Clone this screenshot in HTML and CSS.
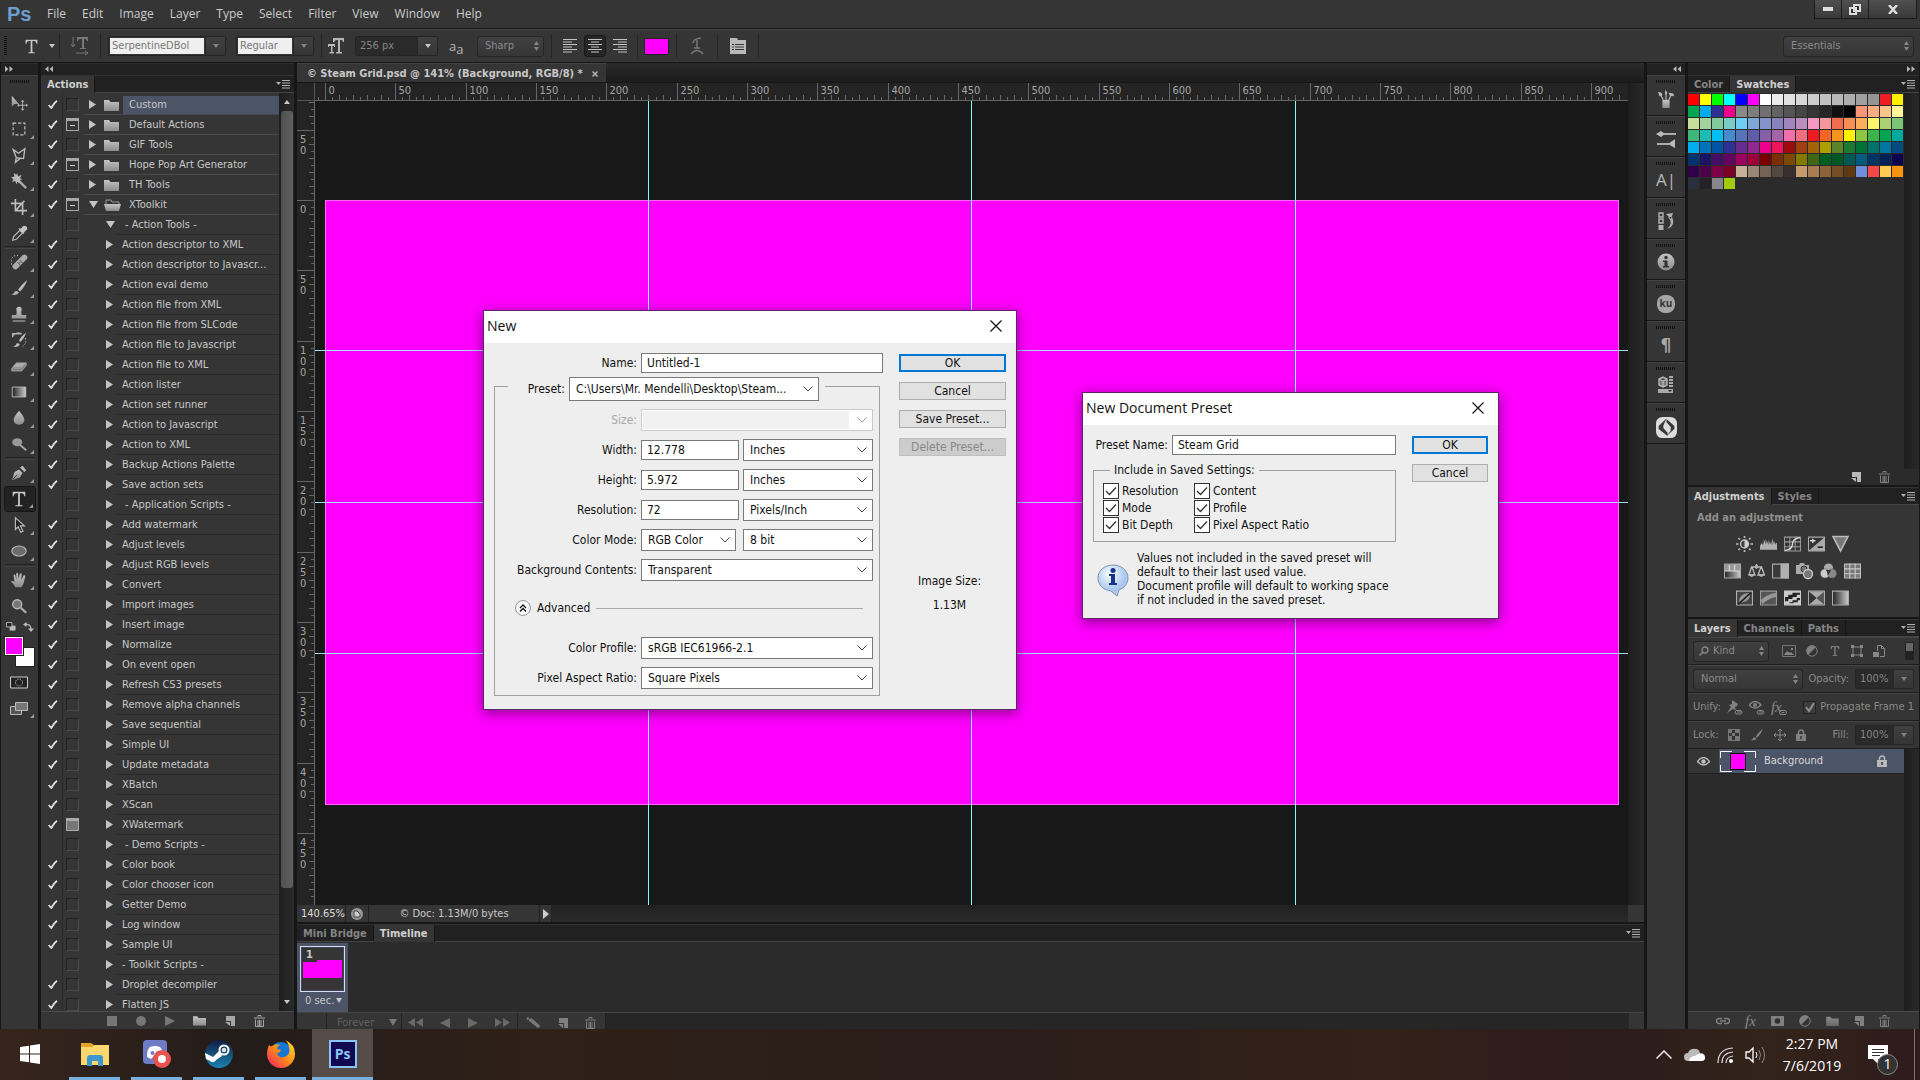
FILE: index.html
```html
<!DOCTYPE html>
<html lang="en">
<head>
<meta charset="utf-8">
<title>Steam Grid.psd</title>
<link rel="stylesheet" href="styles.css">
</head>
<body>
<svg class="defs" aria-hidden="true">
  <defs>
    <linearGradient id="metal" x1="0" y1="0" x2="0" y2="1"><stop offset="0" stop-color="#c4c4c4"/><stop offset="1" stop-color="#8c8c8c"/></linearGradient>
    <linearGradient id="fade"><stop offset="0" stop-color="#222"/><stop offset="1" stop-color="#ccc"/></linearGradient>
    <symbol id="menu" viewBox="0 0 14 9"><path d="M0 2h5L2.500 5z" fill="#b0b0b0"/><path d="M6 .5h8M6 3h8M6 5.500h8M6 8h8" stroke="#b0b0b0"/></symbol>
    <symbol id="ffwd" viewBox="0 0 8 6"><path d="M0 0l3.500 3L0 6zM4.500 0L8 3 4.500 6z" fill="#b5b5b5"/></symbol>
    <symbol id="rwd" viewBox="0 0 8 6"><path d="M3.500 0L0 3l3.500 3zM8 0L4.500 3 8 6z" fill="#b5b5b5"/></symbol>
    <symbol id="down" viewBox="0 0 6 4"><path d="M0 0h6L3 4z" fill="currentColor"/></symbol>
    <symbol id="check" viewBox="0 0 10 9"><path d="M.7 5l2.600 3C4.500 5.500 6.500 2.700 9 .8" fill="none" stroke="currentColor" stroke-width="1.800"/></symbol>
    <symbol id="trir" viewBox="0 0 7 9"><path d="M0 0l7 4.500L0 9z" fill="#c4c4c4"/></symbol>
    <symbol id="trid" viewBox="0 0 9 7"><path d="M0 0h9L4.500 7z" fill="#c4c4c4"/></symbol>
    <symbol id="folder" viewBox="0 0 15 12"><path d="M0 1h5l1.500 2H15v9H0z" fill="url(#metal)"/></symbol>
    <symbol id="folderopen" viewBox="0 0 17 12"><path d="M2 5V1h5l1 2h7v2" fill="none" stroke="#999"/><path d="M0 5h17l-2 7H2z" fill="url(#metal)"/></symbol>
    <symbol id="newdoc" viewBox="0 0 10 10"><path d="M1 0h9v10H6V5H1z" fill="currentColor"/><path d="M0 6h5v4z" fill="currentColor"/></symbol>
    <symbol id="trash" viewBox="0 0 11 12"><path d="M0 3h11M4 2V.5h3V2M1.500 4.500V11.500h8V4.500M4 5v6M5.500 5v6M7 5v6" fill="none" stroke="currentColor"/></symbol>

    <symbol id="move" viewBox="0 0 20 20"><path d="M2 2v12l3-3h5z" fill="url(#metal)"/><path d="M14 8v9M9.500 12.500h9" stroke="#bbb"/><path d="M14 6.500l2 2h-4zM14 18.500l2-2h-4zM8 12.500l2-2v4zM20 12.500l-2-2v4z" fill="#bbb"/></symbol>
    <symbol id="marquee" viewBox="0 0 20 20"><path d="M3.500 3.500h13v13h-13z" fill="none" stroke="#c4c4c4" stroke-width="1.300" stroke-dasharray="3.500 2"/></symbol>
    <symbol id="lasso" viewBox="0 0 20 20"><path d="M3.500 4l6 4 7-5-1.500 11-8-1zM7 13l-1 5 5-4" fill="none" stroke="#bdbdbd" stroke-width="1.500"/></symbol>
    <symbol id="wand" viewBox="0 0 20 20"><path d="M9 9l9 9" stroke="#aaa" stroke-width="2.600"/><path d="M8 1l1 4 4-2-2 4 3 1-3 1 1 4-4-2-1 3-1-4-4 1 2-3-3-2 4-1-1-4 3 2z" fill="#bbb"/></symbol>
    <symbol id="crop" viewBox="0 0 20 20"><path d="M6 1v13h13M1 6h13v13M7 13l9-10" fill="none" stroke="#bdbdbd" stroke-width="1.800"/></symbol>
    <symbol id="dropper" viewBox="0 0 20 20"><path d="M3 18l1-4 7-7 3 3-7 7z" fill="none" stroke="#bbb" stroke-width="1.300"/><path d="M9 5l6 6 1-2 3-3q1-4-4-4l-3 3z" fill="#c4c4c4"/></symbol>
    <symbol id="heal" viewBox="0 0 20 20"><path d="M6 15L16 5" stroke="#aaa" stroke-width="6.500" stroke-linecap="round"/><path d="M8.500 10.500l3 3M11 8l3 3M10 11.500l2-2" stroke="#444"/><path d="M2 13C0 5 4 2 9 3" fill="none" stroke="#ccc" stroke-dasharray="1.500 2"/></symbol>
    <symbol id="brush" viewBox="0 0 20 20"><path d="M19 1Q12 7 9 12l2 2Q17 8 19 1z" fill="#bbb"/><path d="M1 17q4 0 4-3 3-2 5 1-2 4-9 2z" fill="#b5b5b5"/></symbol>
    <symbol id="stamp" viewBox="0 0 20 20"><path d="M7 5a3 3 0 116 0q-1 3 0 6h5v4H2v-4h5q1-3 0-6zM3 17h14v1.500H3z" fill="url(#metal)"/></symbol>
    <symbol id="history" viewBox="0 0 20 20"><path d="M18 2q-6 4-8 9l2 1q4-4 6-10zM3 17q4 0 4-3 3-1 4 1-2 4-8 2z" fill="#bbb"/><path d="M3 7V3h10M3 5q5-4 9-2" fill="none" stroke="#b0b0b0" stroke-width="1.600"/><path d="M17 8q2 6-4 10" fill="none" stroke="#ccc" stroke-dasharray="1.500 1.500"/></symbol>
    <symbol id="eraser" viewBox="0 0 20 20"><path d="M7 6h11l-5 6H2z" fill="#aaa"/><path d="M2 12.500h11l5-6v3l-5 6H2z" fill="#7a7a7a" stroke="#aaa"/></symbol>
    <symbol id="gradient" viewBox="0 0 20 20"><path d="M2.500 4.500h15v11h-15z" fill="url(#fade)" stroke="#c0c0c0"/></symbol>
    <symbol id="drop" viewBox="0 0 20 20"><path d="M10 2q6 7 6 10a6 5.500 0 01-12 0q0-3 6-10z" fill="url(#metal)"/></symbol>
    <symbol id="dodge" viewBox="0 0 20 20"><ellipse cx="8" cy="8" rx="5.500" ry="4.500" fill="#999"/><path d="M11 11l7 6" stroke="#aaa" stroke-width="2"/></symbol>
    <symbol id="pen" viewBox="0 0 20 20"><path d="M2 18l3-9 5-3 4 4-3 5z" fill="url(#metal)"/><path d="M3 17l5-5" stroke="#333"/><path d="M11 4l5 5 2-2-4-5z" fill="#bbb"/></symbol>
    <symbol id="type" viewBox="0 0 20 20"><path d="M3 2h14v5h-1Q15.500 3.500 13 3.500h-2V16q0 1 3 1v1H6v-1q3 0 3-1V3.500H7Q4.500 3.500 4 7H3z" fill="#c8c8c8"/></symbol>
    <symbol id="select" viewBox="0 0 20 20"><path d="M6 2v13l3-3 3 6 2.500-1-3-6H16z" fill="#222" stroke="#bbb" stroke-width="1.300"/></symbol>
    <symbol id="ellipse" viewBox="0 0 20 20"><ellipse cx="10" cy="10" rx="8" ry="5.500" fill="#6b6b6b" stroke="#bbb" stroke-width="1.200"/></symbol>
    <symbol id="hand" viewBox="0 0 20 20"><path d="M6 18q-2-4-5-6 1-2 4 0L4 5q1-2 2 0l1 5V3q1-2 2 0l.5 6L11 3q1.500-1 2 0l-.5 7L15 5q2-1 2 1l-2 8-2 4z" fill="url(#metal)"/></symbol>
    <symbol id="zoomt" viewBox="0 0 20 20"><circle cx="8" cy="8" r="5" fill="#777" stroke="#bbb" stroke-width="1.500"/><path d="M12 12l6 5.500" stroke="#aaa" stroke-width="2.600"/></symbol>
    <symbol id="defcol" viewBox="0 0 11 10"><path d="M4 4h6.500v5.500H4z" fill="#bbb"/><path d="M.5.500h6v5h-6z" fill="#222" stroke="#bbb"/></symbol>
    <symbol id="swap" viewBox="0 0 11 10"><path d="M2 2.500q6-1 6 5" fill="none" stroke="#bbb" stroke-width="1.300"/><path d="M0 2.500L3.500 0v5zM5 6.500h6L8 10z" fill="#bbb"/></symbol>
    <symbol id="qmask" viewBox="0 0 18 12"><path d="M.5.500h17v11H.5z" fill="#222" stroke="#ccc"/><circle cx="9" cy="6" r="3.500" fill="none" stroke="#ccc" stroke-dasharray="1.200 1.200"/></symbol>
    <symbol id="screen" viewBox="0 0 18 13"><path d="M.5 4.500h11v8H.5z" fill="#555" stroke="#bbb"/><path d="M5.500.5h12v8h-12z" fill="#777" stroke="#bbb"/></symbol>

    <symbol id="orient" viewBox="0 0 18 20"><path d="M2 1v9M0 8l2 3 2-3M5 17h11M14 15l3 2-3 2" fill="none" stroke="#777"/><path d="M6 1h11v4h-1q0-2-2-2h-1v9h2v1H9v-1h2V3h-2Q7 3 7 5H6z" fill="#777"/></symbol>
    <symbol id="tsize" viewBox="0 0 16 16"><path d="M5 0h11v4h-1q0-2-2-2h-1v12h2v1.500H8V14h2V2H9Q7 2 6 4H5zM0 6h7v3H6V8H4.500v6H6v1.500H1.500V14H3V8H1v1H0z" fill="#b5b5b5"/></symbol>
    <symbol id="al" viewBox="0 0 14 14"><path d="M0 .5h14M0 3h9M0 5.500h14M0 8h9M0 10.500h14M0 13h9" stroke="#c4c4c4"/></symbol>
    <symbol id="ac" viewBox="0 0 14 14"><path d="M0 .5h14M3 3h8M0 5.500h14M3 8h8M0 10.500h14M3 13h8" stroke="#c4c4c4"/></symbol>
    <symbol id="ar" viewBox="0 0 14 14"><path d="M0 .5h14M5 3h9M0 5.500h14M5 8h9M0 10.500h14M5 13h9" stroke="#c4c4c4"/></symbol>
    <symbol id="warp" viewBox="0 0 14 18"><path d="M3 6q0-4 8-5M7 3v8M4 11h6M1 17q6-7 12 0" fill="none" stroke="#777" stroke-width="1.500"/></symbol>
    <symbol id="cpanel" viewBox="0 0 16 16"><path d="M0 0h7l1 2h8v14H0z" fill="#b9b9b9"/><path d="M2 6.500h12M2 9h12M2 11.500h12" stroke="#333"/><path d="M4.500 5v8" stroke="#b9b9b9"/></symbol>

    <symbol id="d1" viewBox="0 0 20 20"><path d="M6 11h8v9H6z" fill="url(#metal)"/><path d="M7 11L3 4M10 11V3M13 11l3-6" stroke="#aaa" stroke-width="1.400"/><path d="M1 2l4 1 1 3-3 1zM9 0q3 2 2 5H9zM13 3l5 1 1 3-5-1z" fill="#bbb"/></symbol>
    <symbol id="d2" viewBox="0 0 20 18"><path d="M8 4h12M1 14h12" stroke="#aaa" stroke-width="2"/><path d="M0 4l5-3 4 3-4 3zM12 14l7-5v9z" fill="#bbb"/></symbol>
    <symbol id="d4" viewBox="0 0 16 18"><path d="M1 1h4v4H1zM1 7h4v4H1z" fill="none" stroke="#b5b5b5" stroke-width="1.400"/><path d="M.5 13h5v5h-5zM8 2l7-1-2 6zM10 5q6 6-1 12 9-3 5-12z" fill="#b0b0b0"/></symbol>
    <symbol id="d5" viewBox="0 0 18 18"><circle cx="9" cy="9" r="8.500" fill="url(#metal)"/><circle cx="9" cy="4.500" r="1.700" fill="#333"/><path d="M6 7.500h4.500V13H12v1.500H6V13h1.500V9H6z" fill="#333"/></symbol>
    <symbol id="d8" viewBox="0 0 16 18"><path d="M5 1l4 2v6l-4 2-4-2V3zM1 3l4 2 4-2M5 5v6" fill="#777" stroke="#bbb" stroke-width="1.300"/><path d="M11 1h4M11 4h4M11 7h4M11 10h4" stroke="#aaa" stroke-width="2"/><path d="M0 13h15v4H0z" fill="#aaa"/><path d="M10 14h4l-2 2z" fill="#222"/></symbol>
    <symbol id="d9" viewBox="0 0 20 20"><rect width="20" height="20" rx="6" fill="#dcdcdc"/><path d="M10 1.500L2.500 8.500v3L11 18V15L7 10.500V8zM10 2v3l4 4.500V13l-4 5 7.500-6.500v-3z" fill="#383838"/></symbol>

    <symbol id="a1" viewBox="0 0 17 16"><circle cx="8.500" cy="8" r="4" fill="#444" stroke="#c0c0c0" stroke-width="1.300"/><path d="M8.500 4a4 4 0 010 8z" fill="#ccc"/><path d="M8.500 0v2M8.500 14v2M0 8h2.500M14.500 8H17M2.500 2l1.500 1.500M13 12.500l1.500 1.500M14.500 2L13 3.500M4 12.500L2.500 14" stroke="#c0c0c0" stroke-width="1.600"/></symbol>
    <symbol id="a2" viewBox="0 0 18 12"><path d="M0 12V6l1 2V5l2 2V3l1 4V1l2 5V0l1 6V2l2 5V1l1 5V3l2 4V2l1 5V0l2 6V3l2 4V5h1v7z" fill="#b0b0b0"/></symbol>
    <symbol id="a3" viewBox="0 0 16 14"><path d="M.5.500h15v13H.5zM5.500 0v14M10.500 0v14M0 5h16M0 9.500h16" fill="none" stroke="#999"/><path d="M1 13Q8 12 8 7t7-6" fill="none" stroke="#ddd" stroke-width="1.300"/></symbol>
    <symbol id="a4" viewBox="0 0 16 14"><path d="M.5.500h15v13H.5z" fill="#aaa" stroke="#aaa"/><path d="M1 1v12L15 1z" fill="#333"/><path d="M2 4h5M4.500 2v4" stroke="#ddd" stroke-width="1.300"/><path d="M9 10h5" stroke="#222" stroke-width="1.500"/></symbol>
    <symbol id="a5" viewBox="0 0 16 15"><path d="M1 .5h14L8 14z" fill="#777" stroke="#bbb" stroke-width="1.500"/></symbol>
    <symbol id="b1" viewBox="0 0 16 14"><path d="M.5.500h15v13H.5z" fill="url(#fade)" stroke="#aaa"/><path d="M1 1h14v6H1z" fill="#999"/><path d="M5 1v6M10 1v6M1 7h14" stroke="#ddd"/></symbol>
    <symbol id="b2" viewBox="0 0 17 14"><path d="M3 3h11M8.500 0v5M3.500 3L1 11h6L4 3M13 3l-3 8h6.500L13.500 3" fill="none" stroke="#bbb" stroke-width="1.300"/><path d="M0 10h7q-3 6-7 0zM10 10h7q-4 6-7 0zM7 1h3v3H7z" fill="#b0b0b0"/></symbol>
    <symbol id="b3" viewBox="0 0 16 14"><path d="M.5.500h15v13H.5z" fill="#3a3a3a" stroke="#aaa"/><path d="M8 0h8v14H8z" fill="#b0b0b0"/></symbol>
    <symbol id="b4" viewBox="0 0 17 16"><path d="M0 2h3l1-2h4l1 2h4v9H0z" fill="#aaa"/><circle cx="8" cy="6" r="3" fill="#777" stroke="#333"/><circle cx="12" cy="11" r="4.500" fill="#777" stroke="#ccc" stroke-width="1.300"/></symbol>
    <symbol id="b5" viewBox="0 0 17 16"><circle cx="8.500" cy="5" r="4.600" fill="#aaa"/><circle cx="5" cy="10.500" r="4.600" fill="#ccc" stroke="#555" stroke-width=".6"/><circle cx="12" cy="10.500" r="4.600" fill="#888" stroke="#555" stroke-width=".6"/><path d="M6 7h5l-2.500 5z" fill="#333"/></symbol>
    <symbol id="b6" viewBox="0 0 16 14"><path d="M.5.500h15v13H.5z" fill="#777" stroke="#bbb"/><path d="M5.500 0v14M10.500 0v14M0 5h16M0 9.500h16" stroke="#ccc"/></symbol>
    <symbol id="c1" viewBox="0 0 16 14"><path d="M.5.500h15v13H.5z" fill="#444" stroke="#b0b0b0"/><path d="M3 12Q2 3 13 2q1 8-7 9z" fill="#999"/><path d="M14 2L2 13" stroke="#222" stroke-width="1.500"/></symbol>
    <symbol id="c2" viewBox="0 0 16 14"><path d="M.5.500h15v13H.5z" fill="#555" stroke="#999"/><path d="M1 9Q5 4 15 2v4Q8 7 2 13z" fill="#999"/></symbol>
    <symbol id="c3" viewBox="0 0 16 14"><path d="M.5.500h15v13H.5z" fill="#ccc" stroke="#ccc"/><path d="M1 6h3V4h4V2h7v2h-3v2H8v2H4v2H1zM5 11h3V9h4V7h3v2h-2v2H9v1H5z" fill="#222"/></symbol>
    <symbol id="c4" viewBox="0 0 16 14"><path d="M.5.500h15v13H.5z" fill="#555" stroke="#aaa"/><path d="M1 1l7 6 7-6zM1 13l7-6 7 6z" fill="#aaa"/><path d="M1 1l7 6-7 6z" fill="#333"/></symbol>
    <symbol id="c5" viewBox="0 0 16 14"><path d="M.5.500h15v13H.5z" fill="url(#fade)" stroke="#aaa"/></symbol>

    <symbol id="search" viewBox="0 0 10 10"><circle cx="6" cy="4" r="3" fill="none" stroke="#888" stroke-width="1.300"/><path d="M4 6L.5 9.500" stroke="#888" stroke-width="1.500"/></symbol>
    <symbol id="pic" viewBox="0 0 14 12"><path d="M.5.500h13v11H.5z" fill="none" stroke="#777"/><path d="M2 10l3-4 3 2 1-1 3 3z" fill="#888"/><path d="M9 3h2v2H9z" fill="#888"/></symbol>
    <symbol id="adj" viewBox="0 0 12 12"><circle cx="6" cy="6" r="5.200" fill="#333" stroke="currentColor"/><path d="M2 10A5.500 5.500 0 0110 2z" fill="currentColor"/></symbol>
    <symbol id="shape" viewBox="0 0 12 12"><path d="M2 2h8v8H2z" fill="none" stroke="#888"/><path d="M0 0h3v3H0zM9 0h3v3H9zM0 9h3v3H0zM9 9h3v3H9z" fill="#888"/></symbol>
    <symbol id="smart" viewBox="0 0 12 12"><path d="M4.500 6V.5h4l3 3v8H7M8.500.5v3h3" fill="none" stroke="#888"/><path d="M0 7h6v5H0z" fill="#888"/></symbol>
    <symbol id="pin" viewBox="0 0 16 15"><path d="M5 0l6 4-1 2-2 1 1 3-3-1-6 4 4-6-2-2 3-1z" fill="#808080"/><path d="M9 10.500h5q2 2 0 3.500H9q-2-2 0-3.500zM10 12h4" fill="none" stroke="#888"/></symbol>
    <symbol id="eyel" viewBox="0 0 16 15"><path d="M0 5q6-7 12 0-6 6-12 0z" fill="none" stroke="#808080" stroke-width="1.400"/><circle cx="6" cy="5" r="2" fill="#808080"/><path d="M9 10.500h5q2 2 0 3.500H9q-2-2 0-3.500zM10 12h4" fill="none" stroke="#888"/></symbol>
    <symbol id="minichain" viewBox="0 0 8 5"><path d="M1.500.5h5q2 2 0 4h-5q-2-2 0-4zM2.500 2.500h3" fill="none" stroke="#888"/></symbol>
    <symbol id="chain" viewBox="0 0 14 8"><path d="M6 1.500H3a2.500 2.500 0 000 5h3M8 1.500h3a2.500 2.500 0 010 5H8M4 4h6" fill="none" stroke="currentColor" stroke-width="1.500"/></symbol>
    <symbol id="checker" viewBox="0 0 12 12"><path d="M0 0h12v12H0z" fill="#777"/><path d="M4 1h3v3H4zM1 4h3v3H1zM7 4h4v3H7zM4 7h3v4H4z" fill="#333"/></symbol>
    <symbol id="cross4" viewBox="0 0 14 14"><path d="M7 1v12M1 7h12M5 3l2-2 2 2M5 11l2 2 2-2M3 5L1 7l2 2M11 5l2 2-2 2" fill="none" stroke="#888"/></symbol>
    <symbol id="lock" viewBox="0 0 10 12"><path d="M2.500 6V3.500a2.500 2.500 0 015 0V6" fill="none" stroke="currentColor" stroke-width="1.500"/><path d="M0 5h10v7H0z" fill="currentColor"/><path d="M5 7v3" stroke="#333" stroke-width="1.500"/></symbol>
    <symbol id="eye" viewBox="0 0 13 9"><path d="M.5 4.500q6-8 12 0-6 7-12 0z" fill="none" stroke="#c0c0c0" stroke-width="1.300"/><circle cx="6.500" cy="4.500" r="2.200" fill="#c0c0c0"/></symbol>
    <symbol id="mask" viewBox="0 0 13 10"><path d="M0 0h13v10H0z" fill="#808080"/><circle cx="6.500" cy="5" r="2.800" fill="#303030"/></symbol>
    <symbol id="dots" viewBox="0 0 14 12"><path d="M1 1l7 5" stroke="#777" stroke-width="2.500" stroke-dasharray="2 1"/><path d="M5 3l7 6" stroke="#777" stroke-width="3.500" stroke-linecap="round"/></symbol>
    <symbol id="tofile" viewBox="0 0 12 12"><circle cx="6" cy="6" r="6" fill="#999"/><path d="M3 3h3l3 3v3H3z" fill="#ccc" stroke="#444"/></symbol>
    <symbol id="xwin" viewBox="0 0 12 12"><path d="M.5.500l11 11M11.500.5l-11 11" stroke="#111" stroke-width="1.200"/></symbol>
  </defs>
</svg>

<div class="app">
  <header class="menubar">
    <span class="ps">Ps</span>
    <nav class="menus"><a href="#">File</a><a href="#">Edit</a><a href="#">Image</a><a href="#">Layer</a><a href="#">Type</a><a href="#">Select</a><a href="#">Filter</a><a href="#">View</a><a href="#">Window</a><a href="#">Help</a></nav>
    <div class="winbtns">
      <button aria-label="Minimize"><svg width="10" height="4"><path d="M0 0h10v4H0z" fill="#ddd"/></svg></button>
      <button aria-label="Restore"><svg width="12" height="11"><path d="M5 1h6v6H5zM1 4h6v6H1z" fill="#333" stroke="#ddd" stroke-width="2"/></svg></button>
      <button class="wide" aria-label="Close"><svg width="10" height="9"><path d="M1 0l8 9M9 0L1 9" stroke="#ddd" stroke-width="2.500"/></svg></button>
    </div>
  </header>

  <section class="options">
    <i class="vgrip"></i>
    <button class="typebtn" aria-label="Type tool"><svg width="17" height="17"><use href="#type"/></svg><svg class="lt" width="6" height="4"><use href="#down"/></svg></button>
    <i class="sep"></i>
    <button class="orient" aria-label="Text orientation"><svg width="18" height="20"><use href="#orient"/></svg></button>
    <i class="sep"></i>
    <span class="combo font"><input value="SerpentineDBol" aria-label="Font"><button aria-label="Fonts"><svg width="6" height="4"><use href="#down"/></svg></button></span>
    <span class="combo style"><input value="Regular" aria-label="Style"><button aria-label="Styles"><svg width="6" height="4"><use href="#down"/></svg></button></span>
    <i class="sep"></i>
    <svg width="16" height="16"><use href="#tsize"/></svg>
    <span class="combo dark size"><input value="256 px" aria-label="Size"><button aria-label="Sizes"><svg class="lt" width="6" height="4"><use href="#down"/></svg></button></span>
    <span class="aa">a<sub>a</sub></span>
    <span class="drop sharp"><select aria-label="Anti-aliasing"><option>Sharp</option></select></span>
    <i class="sep"></i>
    <div class="aligns">
      <button aria-label="Left"><svg width="14" height="14"><use href="#al"/></svg></button>
      <button class="on" aria-label="Centre"><svg width="14" height="14"><use href="#ac"/></svg></button>
      <button aria-label="Right"><svg width="14" height="14"><use href="#ar"/></svg></button>
    </div>
    <i class="sep"></i>
    <button class="textcolor" aria-label="Text color"></button>
    <i class="sep"></i>
    <button class="mid" aria-label="Warp"><svg width="14" height="18"><use href="#warp"/></svg></button>
    <i class="sep"></i>
    <button class="mid" aria-label="Panels"><svg width="16" height="16"><use href="#cpanel"/></svg></button>
    <i class="sep"></i>
    <span class="drop essentials"><select aria-label="Workspace"><option>Essentials</option></select></span>
  </section>

  <main class="workspace">
    <aside class="tools">
      <div class="strip"><svg width="8" height="6"><use href="#ffwd"/></svg></div>
      <div class="toolbox">
        <i class="hgrip"></i>
        <button aria-label="Move"><svg><use href="#move"/></svg></button>
        <button class="more" aria-label="Marquee"><svg><use href="#marquee"/></svg></button>
        <button class="more" aria-label="Lasso"><svg><use href="#lasso"/></svg></button>
        <button class="more" aria-label="Wand"><svg><use href="#wand"/></svg></button>
        <button class="more" aria-label="Crop"><svg><use href="#crop"/></svg></button>
        <button class="more" aria-label="Eyedropper"><svg><use href="#dropper"/></svg></button>
        <hr>
        <button class="more" aria-label="Healing"><svg><use href="#heal"/></svg></button>
        <button class="more" aria-label="Brush"><svg><use href="#brush"/></svg></button>
        <button class="more" aria-label="Stamp"><svg><use href="#stamp"/></svg></button>
        <button class="more" aria-label="History brush"><svg><use href="#history"/></svg></button>
        <button class="more" aria-label="Eraser"><svg><use href="#eraser"/></svg></button>
        <button class="more" aria-label="Gradient"><svg><use href="#gradient"/></svg></button>
        <button class="more" aria-label="Blur"><svg><use href="#drop"/></svg></button>
        <button class="more" aria-label="Dodge"><svg><use href="#dodge"/></svg></button>
        <hr>
        <button class="more" aria-label="Pen"><svg><use href="#pen"/></svg></button>
        <button class="more on" aria-label="Type"><svg><use href="#type"/></svg></button>
        <button class="more" aria-label="Path selection"><svg><use href="#select"/></svg></button>
        <button class="more" aria-label="Ellipse"><svg><use href="#ellipse"/></svg></button>
        <hr>
        <button class="more" aria-label="Hand"><svg><use href="#hand"/></svg></button>
        <button aria-label="Zoom"><svg><use href="#zoomt"/></svg></button>
        <div class="mini"><svg width="10" height="9"><use href="#defcol"/></svg><svg width="11" height="10"><use href="#swap"/></svg></div>
        <div class="colors"><i class="bgc"></i><i class="fgc"></i></div>
        <button aria-label="Quick mask"><svg class="flat"><use href="#qmask"/></svg></button>
        <button class="more" aria-label="Screen mode"><svg class="flat"><use href="#screen"/></svg></button>
      </div>
    </aside>

    <section class="actions">
      <div class="strip"><svg width="8" height="6"><use href="#rwd"/></svg></div>
      <div class="tabs"><a class="on" href="#">Actions</a><svg class="pm" width="14" height="9"><use href="#menu"/></svg></div>
      <div class="actbody">
        <div class="actlist" id="actlist"></div>
        <div class="scroll"><svg class="lt" width="6" height="4" viewBox="0 0 6 4"><path d="M0 4h6L3 0z" fill="currentColor"/></svg><i></i><svg class="lt" width="6" height="4"><use href="#down"/></svg></div>
      </div>
      <div class="foot actfoot">
        <svg width="10" height="10"><path d="M0 0h10v10H0z" fill="#777"/></svg>
        <svg width="10" height="10"><circle cx="5" cy="5" r="5" fill="#777"/></svg>
        <svg width="10" height="10"><path d="M0 0l10 5-10 5z" fill="#777"/></svg>
        <svg width="13" height="10" viewBox="0 1 15 11"><use href="#folder" width="15" height="12"/></svg>
        <svg width="10" height="10"><use href="#newdoc"/></svg>
        <svg width="11" height="12"><use href="#trash"/></svg>
      </div>
    </section>

    <section class="document">
      <div class="doctabs"><a href="#">© Steam Grid.psd @ 141% (Background, RGB/8) *<svg width="6" height="6"><path d="M.5.500l5 5M5.500.5l-5 5" stroke="#bbb" stroke-width="1.400"/></svg></a></div>
      <div class="stage">
        <div class="corner"></div>
        <svg class="hruler" id="hruler"></svg>
        <svg class="vruler" id="vruler"></svg>
        <div class="view">
          <div class="art"></div>
          <i class="gv g1"></i><i class="gv g2"></i><i class="gv g3"></i>
          <i class="gh h1"></i><i class="gh h2"></i><i class="gh h3"></i>
        </div>
        <div class="vscroll"></div>
      </div>
      <div class="status"><span class="pct">140.65%</span><span class="tf"><svg width="12" height="12"><use href="#tofile"/></svg></span><span class="docsize">© Doc: 1.13M/0 bytes</span><button aria-label="Status menu"><svg width="6" height="10"><path d="M0 0l6 5-6 5z" fill="#ccc"/></svg></button><i class="size"></i></div>
      <div class="timeline">
        <div class="tabs"><a href="#">Mini Bridge</a><a class="on" href="#">Timeline</a><svg class="pm" width="14" height="9"><use href="#menu"/></svg></div>
        <div class="frames"><div class="frame"><div class="thumb"><b>1</b><i></i></div><span>0 sec.<svg class="lt" width="6" height="5"><path d="M0 0h6L3 5z" fill="currentColor"/></svg></span></div></div>
        <div class="controls">
          <span class="blank"></span>
          <button class="forever">Forever<svg width="8" height="7"><path d="M0 0h8L4 7z" fill="#777"/></svg></button>
          <div class="play">
            <svg width="15" height="9"><path d="M7 0v9L0 4.500zM15 0v9L8 4.500z" fill="#6a6a6a"/></svg>
            <svg width="10" height="10"><path d="M10 0v10L0 5z" fill="#6a6a6a"/></svg>
            <svg width="10" height="10"><path d="M0 0v10l10-5z" fill="#6a6a6a"/></svg>
            <svg width="15" height="9"><path d="M0 0v9l7-4.500zM8 0v9l7-4.500z" fill="#6a6a6a"/></svg>
          </div>
          <div class="more3"><svg width="14" height="12"><use href="#dots"/></svg><svg width="10" height="10"><use href="#newdoc"/></svg><svg width="11" height="12"><use href="#trash"/></svg></div>
          <span class="rest"></span><i class="end"></i>
        </div>
      </div>
    </section>

    <aside class="dock">
      <div class="strip right"><svg width="8" height="6"><use href="#rwd"/></svg></div>
      <div class="dockcol">
        <button aria-label="Brush presets"><i class="hgrip"></i><svg width="18" height="20"><use href="#d1"/></svg></button>
        <button aria-label="Brush"><i class="hgrip"></i><svg width="20" height="18"><use href="#d2"/></svg></button>
        <button><i class="hgrip"></i><span class="chr">A|</span></button>
        <button aria-label="History"><i class="hgrip"></i><svg width="16" height="18"><use href="#d4"/></svg></button>
        <button aria-label="Info"><i class="hgrip"></i><svg width="18" height="18"><use href="#d5"/></svg></button>
        <button><i class="hgrip"></i><span class="ku">ku</span></button>
        <button><i class="hgrip"></i><span class="pil">¶</span></button>
        <button aria-label="3D"><i class="hgrip"></i><svg width="16" height="18"><use href="#d8"/></svg></button>
        <button aria-label="Plugin"><i class="hgrip"></i><svg width="21" height="21"><use href="#d9"/></svg></button>
      </div>
    </aside>

    <aside class="panels">
      <div class="strip right"><svg width="8" height="6"><use href="#ffwd"/></svg></div>
      <div class="tabs"><a href="#">Color</a><a class="on" href="#">Swatches</a><svg class="pm" width="14" height="9"><use href="#menu"/></svg></div>
      <div class="swatchbody"><div class="swatches" id="swatches"></div><i class="track"></i></div>
      <div class="swfoot"><svg class="lt2" width="10" height="10"><use href="#newdoc"/></svg><svg width="11" height="12"><use href="#trash"/></svg></div>
      <div class="tabs"><a class="on" href="#">Adjustments</a><a href="#">Styles</a><svg class="pm" width="14" height="9"><use href="#menu"/></svg></div>
      <div class="adjust">
        <h2>Add an adjustment</h2>
        <div><svg><use href="#a1"/></svg><svg><use href="#a2"/></svg><svg><use href="#a3"/></svg><svg><use href="#a4"/></svg><svg><use href="#a5"/></svg></div>
        <div><svg><use href="#b1"/></svg><svg><use href="#b2"/></svg><svg><use href="#b3"/></svg><svg><use href="#b4"/></svg><svg><use href="#b5"/></svg><svg><use href="#b6"/></svg></div>
        <div><svg><use href="#c1"/></svg><svg><use href="#c2"/></svg><svg><use href="#c3"/></svg><svg><use href="#c4"/></svg><svg><use href="#c5"/></svg></div>
      </div>
      <div class="tabs"><a class="on" href="#">Layers</a><a href="#">Channels</a><a href="#">Paths</a><svg class="pm" width="14" height="9"><use href="#menu"/></svg></div>
      <div class="lrow filter">
        <span class="drop kind"><svg width="10" height="10"><use href="#search"/></svg><select aria-label="Filter"><option>Kind</option></select></span>
        <div class="fi"><svg width="14" height="12"><use href="#pic"/></svg><svg width="12" height="12"><use href="#adj"/></svg><svg class="dim" width="12" height="12"><use href="#type"/></svg><svg width="12" height="12"><use href="#shape"/></svg><svg width="12" height="12"><use href="#smart"/></svg></div>
        <i class="switch"></i>
      </div>
      <div class="lrow">
        <span class="drop blend"><select aria-label="Blend mode"><option>Normal</option></select></span>
        <label class="push" for="op">Opacity:</label><span class="combo dark pc"><input id="op" value="100%"><button aria-label="Opacity slider"><svg width="6" height="4"><use href="#down"/></svg></button></span>
      </div>
      <div class="lrow uni"><span>Unify:</span><svg width="16" height="15"><use href="#pin"/></svg><svg width="16" height="15"><use href="#eyel"/></svg><span class="fxs">fx</span><svg class="mc" width="8" height="5"><use href="#minichain"/></svg><label class="prop push"><input type="checkbox" checked>Propagate Frame 1</label></div>
      <div class="lrow lockr"><span>Lock:</span><svg width="12" height="12"><use href="#checker"/></svg><svg class="dim" width="15" height="14"><use href="#brush"/></svg><svg width="14" height="14"><use href="#cross4"/></svg><svg width="10" height="12"><use href="#lock"/></svg>
        <label class="push" for="fill">Fill:</label><span class="combo dark pc"><input id="fill" value="100%"><button aria-label="Fill slider"><svg width="6" height="4"><use href="#down"/></svg></button></span></div>
      <div class="layers">
        <div class="layerlist"><div class="layer"><span class="vis"><svg width="13" height="9"><use href="#eye"/></svg></span><span class="lthumb"><svg width="36" height="21"><path d="M.5 7V.5H12M24 .5h11.500V7M35.500 14v6.500H24M12 20.500H.5V14" fill="none" stroke="#fff"/><path d="M10.500 2.500h15v16h-15z" fill="#f0f" stroke="#111"/></svg></span><span class="lname">Background</span><svg class="lt2" width="10" height="12"><use href="#lock"/></svg></div></div>
        <i class="track"></i>
      </div>
      <div class="foot layfoot"><svg width="14" height="8"><use href="#chain"/></svg><span class="fx">fx</span><svg width="13" height="10"><use href="#mask"/></svg><svg width="12" height="12"><use href="#adj"/></svg><svg class="dim" width="13" height="10"><use href="#folder"/></svg><svg width="10" height="10"><use href="#newdoc"/></svg><svg width="11" height="12"><use href="#trash"/></svg></div>
    </aside>
  </main>

  <footer class="taskbar">
    <button class="start" aria-label="Start"><svg width="20" height="20"><path d="M0 3l9-1.300V9.500H0zM10 1.500L20 0v9.500H10zM0 10.500h9v7.800L0 17zM10 10.500h10V20l-10-1.500z" fill="#fff"/></svg></button>
    <button aria-label="Explorer"><svg width="28" height="24"><path d="M0 1h10l3 2h15v8H0z" fill="#e0a526"/><path d="M0 5h11l3-2h14v20H0z" fill="#fbd86f"/><path d="M6 24v-8q0-3 3-3h10q3 0 3 3v8h-5v-5h-6v5z" fill="#3f97cf"/></svg></button>
    <button aria-label="Discord"><svg width="30" height="30" viewBox="0 0 30 30"><rect x="1" y="1" width="24" height="24" rx="4" fill="#6d7cc4"/><path d="M5 18q0-8 3-10 5-2 10 0 3 3 3 10l-4 2-2-2h-4l-2 2z" fill="#fff"/><circle cx="10.500" cy="14" r="2" fill="#6d7cc4"/><circle cx="16" cy="14" r="2" fill="#6d7cc4"/><circle cx="20" cy="20" r="9" fill="#e8534f"/><circle cx="20" cy="20" r="4" fill="#fff"/></svg></button>
    <button aria-label="Steam"><svg width="28" height="28" viewBox="0 0 28 28"><defs><linearGradient id="st" x2="0" y2="1"><stop stop-color="#101c40"/><stop offset="1" stop-color="#1b84b4"/></linearGradient></defs><circle cx="14" cy="14" r="14" fill="url(#st)"/><circle cx="19" cy="10" r="4.500" fill="none" stroke="#fff" stroke-width="2"/><circle cx="19" cy="10" r="2.300" fill="#ddd"/><path d="M0 13l8 4 6-6 3 5-6 4q-2 4-6 1l-4-2z" fill="#fff"/></svg></button>
    <button aria-label="Firefox"><svg width="28" height="28" viewBox="0 0 28 28"><defs><linearGradient id="ff" x1="1" x2="0" y2="1"><stop stop-color="#ffe536"/><stop offset=".5" stop-color="#ff8b16"/><stop offset="1" stop-color="#f0186f"/></linearGradient></defs><circle cx="14" cy="13" r="11" fill="#1576d3"/><path d="M2 5q2 2 3 1 4-3 8-1-3 1-3 4l4 1q-1 3-4 3 1 5 7 4 7-2 5-10-1-5-4-7 10 4 10 14a14 14 0 01-28 0Q0 9 2 5z" fill="url(#ff)"/></svg></button>
    <button class="active"><span class="psicon">Ps</span></button>
    <div class="tray">
      <svg width="16" height="9"><path d="M.5 8.500L8 1l7.500 7.500" fill="none" stroke="#eee" stroke-width="1.500"/></svg>
      <svg width="21" height="14"><path d="M4 13a4 4 0 010-8q2-5 8-4 3 0 4 4 5 0 5 4t-4 4z" fill="#bbb"/><path d="M5 13q1-5 6-5 3-3 7-2 3 1 3 4t-4 3z" fill="#fff"/></svg>
      <svg width="16" height="16"><path d="M1 16Q1 2 16 1M5 16q0-10 11-11M9 16q0-6 7-7" fill="none" stroke="#ddd" stroke-width="1.200"/><circle cx="14" cy="14" r="2" fill="#fff"/></svg>
      <svg width="21" height="18"><path d="M1 6h3l4-4v14l-4-4H1z" fill="none" stroke="#fff" stroke-width="1.300"/><path d="M11 6q2 3 0 6" fill="none" stroke="#fff"/><path d="M14 4q3 5 0 10M17 1q5 8 0 16" fill="none" stroke="#888"/></svg>
      <div class="clock"><span>2:27 PM</span><span>7/6/2019</span></div>
      <div class="note"><svg width="20" height="20"><path d="M0 0h20v14H10v5l-5-5H0z" fill="#fff"/><path d="M4 4.500h12M4 7.500h12M4 10.500h8" stroke="#333"/></svg><span>1</span></div>
      <i class="show"></i>
    </div>
  </footer>
</div>

<form class="dialog dnew">
  <div class="title"><h1>New</h1><button type="button" aria-label="Close"><svg width="12" height="12"><use href="#xwin"/></svg></button></div>
  <div class="dbody">
    <div class="fields">
      <div class="row name"><label for="n">Name:</label><input id="n" value="Untitled-1"></div>
      <div class="group">
        <div class="row preset"><label for="pr">Preset:</label><select id="pr"><option>C:\Users\Mr. Mendelli\Desktop\Steam...</option></select></div>
        <div class="row"><label class="off" for="sz">Size:</label><span class="szwrap"><select id="sz" disabled><option></option></select></span></div>
        <div class="row"><label for="w">Width:</label><input class="num" id="w" value="12.778"><select aria-label="Width unit"><option>Inches</option></select></div>
        <div class="row"><label for="h">Height:</label><input class="num" id="h" value="5.972"><select aria-label="Height unit"><option>Inches</option></select></div>
        <div class="row"><label for="r">Resolution:</label><input class="num" id="r" value="72"><select aria-label="Resolution unit"><option>Pixels/Inch</option></select></div>
        <div class="row cm"><label for="cm">Color Mode:</label><select class="mode" id="cm"><option>RGB Color</option></select><select aria-label="Depth"><option>8 bit</option></select></div>
        <div class="row"><label for="bc">Background Contents:</label><select id="bc"><option>Transparent</option></select></div>
        <div class="adv"><button type="button" aria-label="Collapse"><svg width="8" height="8"><path d="M1 4l3-3 3 3M1 7.500l3-3 3 3" fill="none" stroke="#111" stroke-width="1.300"/></svg></button>Advanced<hr></div>
        <div class="row"><label for="cp">Color Profile:</label><select id="cp"><option>sRGB IEC61966-2.1</option></select></div>
        <div class="row"><label for="pa">Pixel Aspect Ratio:</label><select id="pa"><option>Square Pixels</option></select></div>
      </div>
    </div>
    <div class="btns"><button type="button" class="ok">OK</button><button type="button">Cancel</button><button type="button">Save Preset...</button><button type="button" disabled>Delete Preset...</button><p class="isz">Image Size:</p><p>1.13M</p></div>
  </div>
</form>

<form class="dialog dpre">
  <div class="title"><h1>New Document Preset</h1><button type="button" aria-label="Close"><svg width="12" height="12"><use href="#xwin"/></svg></button></div>
  <div class="dbody">
    <div class="fields">
      <div class="row pname"><label for="pn">Preset Name:</label><input id="pn" value="Steam Grid"></div>
      <fieldset><legend>Include in Saved Settings:</legend>
        <label><input type="checkbox" checked>Resolution</label><label><input type="checkbox" checked>Content</label>
        <label><input type="checkbox" checked>Mode</label><label><input type="checkbox" checked>Profile</label>
        <label><input type="checkbox" checked>Bit Depth</label><label><input type="checkbox" checked>Pixel Aspect Ratio</label>
      </fieldset>
      <div class="info">
        <svg width="32" height="33" viewBox="0 0 32 33"><defs><radialGradient id="bub" cx=".4" cy=".3"><stop stop-color="#fff"/><stop offset="1" stop-color="#a9c9ee"/></radialGradient></defs><path d="M16 1c8 0 15 5 15 13 0 6-4 10-9 12l-2 6-6-5C6 26 1 21 1 14 1 6 8 1 16 1z" fill="url(#bub)" stroke="#8094b0"/><circle cx="16" cy="6.500" r="2.500" fill="#15358c"/><path d="M12 10h6v9h2v2h-8v-2h2v-7h-2z" fill="#15358c"/></svg>
        <p>Values not included in the saved preset will<br>default to their last used value.<br>Document profile will default to working space<br>if not included in the saved preset.</p>
      </div>
    </div>
    <div class="btns"><button type="button" class="ok">OK</button><button type="button">Cancel</button></div>
  </div>
</form>
<script src="script.js"></script>
</body>
</html>
```
FILE: styles.css
```css
* { box-sizing: border-box; }
html, body { margin: 0; height: 100%; }
body { font: 11px/14px "DejaVu Sans Condensed", "DejaVu Sans", sans-serif; color: #c8c8c8; background: #1a1a1a; overflow: hidden; }
button { font: inherit; color: inherit; background: none; border: 0; padding: 0; display: flex; align-items: center; justify-content: center; }
input, select { font: inherit; color: inherit; margin: 0; min-width: 0; }
a { color: inherit; text-decoration: none; }
svg { display: block; flex: none; color: #808080; }
svg.lt { color: #c8c8c8; }
svg.lt2 { color: #b8b8b8; }
i { display: block; }
h1, h2, p { margin: 0; }
.defs { position: absolute; width: 0; height: 0; }
.dim { opacity: .6; }

.app { display: flex; flex-direction: column; height: 100vh; }

.menubar { display: flex; align-items: center; height: 29px; background: #353535; border-bottom: 1px solid #161616; padding-left: 7px; flex: none; }
.ps { font: bold 20px/24px "Liberation Sans", sans-serif; color: #6c9fd0; width: 40px; }
.menus { display: flex; gap: 16px; font: 12px/16px "Open Sans", sans-serif; color: #ccc; flex: 1; }
.winbtns { display: flex; align-self: flex-start; height: 19px; margin-right: 3px; border: 1px solid #1c1c1c; border-top: 0; }
.winbtns button { width: 27px; background: linear-gradient(#505050, #393939); border-right: 1px solid #1c1c1c; }
.winbtns .wide { width: 47px; border-right: 0; }

.options { display: flex; align-items: center; height: 34px; background: #353535; border-top: 1px solid #444; border-bottom: 1px solid #161616; padding-left: 4px; flex: none; }
.vgrip { width: 3px; height: 20px; background: repeating-linear-gradient(#111 0 1px, #353535 1px 2px); }
.options .sep { width: 1px; height: 24px; background: #262626; }
.options .typebtn { width: 52px; gap: 9px; padding-left: 16px; justify-content: flex-start; }
.orient { width: 40px; }
.combo { display: flex; height: 20px; border: 1px solid #242424; border-radius: 2px; background: #333; }
.combo input { flex: 1; border: 1px solid #333; background: #efefef; color: #777; padding: 0 2px; width: 0; }
.combo button { width: 20px; border-left: 1px solid #282828; background: linear-gradient(#404040, #363636); }
.combo.dark input { background: #2a2a2a; border: 0; color: #858585; padding: 0 4px; }
.font { width: 118px; margin-left: 7px; }
.style { width: 78px; margin: 0 7px 0 10px; }
.size { width: 83px; margin-left: 11px; }
.options > svg { margin-left: 6px; }
.aa { width: 39px; padding-left: 11px; color: #b5b5b5; font: 13px/16px "Open Sans", sans-serif; }
.aa sub { font-size: 13px; vertical-align: -3px; line-height: 0; }
.drop { display: flex; align-items: center; height: 21px; border: 1px solid #252525; border-radius: 3px; background: linear-gradient(#404040, #363636); color: #8a8a8a; }
.drop select { appearance: none; flex: 1; height: 100%; border: 0; padding: 0 14px 0 7px; background: url("data:image/svg+xml,%3Csvg xmlns='http://www.w3.org/2000/svg' width='5' height='10'%3E%3Cpath d='M0 4h5L2.500 0zM0 6h5L2.500 10z' fill='%23858585'/%3E%3C/svg%3E") no-repeat right 4px center; }
.sharp { width: 67px; margin-right: 7px; }
.aligns { display: flex; gap: 3px; width: 85px; padding-left: 7px; }
.aligns button { width: 22px; height: 22px; border-radius: 3px; }
.aligns .on { background: #262626; border: 1px solid #191919; }
.textcolor { width: 25px; height: 17px; margin: 0 7px 0 6px; background: #f0f; border: 1px solid #222; }
.mid { width: 40px; }
.drop.essentials { width: 131px; margin-left: auto; margin-right: 6px; }

.workspace { display: flex; flex: 1; min-height: 0; gap: 3px; padding: 0 1px; background: #161616; }
.strip { height: 12px; padding: 2px 4px; background: #212121; border-top: 1px solid #2c2c2c; flex: none; }
.strip.right { display: flex; justify-content: flex-end; }
.tools { width: 37px; display: flex; flex-direction: column; }
.toolbox { flex: 1; background: #353535; border-top: 1px solid #444; display: flex; flex-direction: column; align-items: center; padding-top: 4px; }
.hgrip { width: 20px; height: 3px; background: repeating-linear-gradient(90deg, #111 0 1px, #353535 1px 2px); }
.toolbox .hgrip { margin-bottom: 7px; }
.toolbox button { width: 32px; height: 26px; position: relative; flex: none; padding-right: 1px; }
.toolbox button svg { width: 18px; height: 18px; }
.toolbox button svg.flat { height: 13px; }
.more::after { content: ""; position: absolute; right: 2px; bottom: 3px; border: 2px solid; border-color: transparent #999 #999 transparent; }
.toolbox .on { background: #222; border: 1px solid #161616; border-radius: 3px; }
.toolbox hr { width: 30px; height: 3px; margin: 0; border: 0; border-top: 1px solid #222; border-bottom: 1px solid #444; }
.mini { display: flex; justify-content: space-between; width: 28px; height: 16px; padding-top: 3px; }
.colors { position: relative; width: 32px; height: 33px; margin-bottom: 1px; }
.colors i { position: absolute; width: 20px; height: 20px; border: 1px solid #222; }
.bgc { right: 1px; bottom: 1px; background: #fff; }
.fgc { left: 0; top: 1px; background: #f0f; box-shadow: inset 0 0 0 1px #fff; }

.actions { width: 253px; display: flex; flex-direction: column; }
.tabs { display: flex; align-items: stretch; height: 18px; background: #212121; border-top: 1px solid #333; flex: none; font-weight: bold; color: #858585; border-bottom: 1px solid #444; }
.tabs a { padding: 1px 6px 0; border-right: 1px solid #161616; display: flex; align-items: center; }
.tabs .on { background: #353535; color: #d0d0d0; margin-bottom: -1px; }
.pm { margin: 4px 4px 0 auto; }
.actbody { flex: 1; min-height: 0; display: flex; background: #353535; }
.actlist { flex: 1; overflow: hidden; padding-top: 2px; background: linear-gradient(90deg, transparent 21px, #2a2a2a 21px 22px, transparent 22px); }
.act { display: flex; height: 20px; }
.act > .ck { width: 25px; padding: 5px 0 0 7px; }
.act > .ck svg { color: #ddd; }
.act > .bx { width: 13px; height: 13px; margin-top: 3px; border: 1px solid #222; border-right-color: #4a4a4a; border-bottom-color: #4a4a4a; }
.act > .bx.dlg { border-color: #aaa; border-top-width: 3px; }
.act > .bx.dash::after { content: ""; display: block; width: 5px; height: 1px; margin: 4px auto; background: #ccc; }
.act > .bx.fill { background: #777; }
.act > .ct { flex: 1; display: flex; align-items: center; margin-left: 5px; border-bottom: 1px solid #4a4a4a; white-space: nowrap; }
.act > .ct .ar { width: 20px; display: flex; padding-left: 5px; }
.act > .ct .fo { width: 19px; }
.act > .ct .tx { flex: 1; padding: 2px 0 2px 6px; margin-top: 1px; }
.act.kid > .ct { margin-left: 38px; border-color: #2a2a2a; }
.act.kid .ar { width: 10px; padding: 0; margin-left: -11px; }
.act.head .tx { padding-left: 9px; }
.act.cur .tx { background: #4c5468; }
.scroll { width: 15px; background: linear-gradient(90deg, #1e1e1e, #2a2a2a); display: flex; flex-direction: column; align-items: center; padding: 7px 0; }
.scroll i { width: 12px; margin: 7px 0 auto; height: 86%; border-radius: 3px; background: linear-gradient(90deg, #505050, #606060); }
.foot { height: 18px; background: #353535; border-top: 1px solid #4a4a4a; display: flex; align-items: center; flex: none; }
.actfoot { justify-content: space-between; padding: 0 29px 0 66px; }
.actfoot svg { color: #a5a5a5; }

.document { flex: 1; min-width: 0; display: flex; flex-direction: column; background: #1c1c1c; }
.doctabs { height: 20px; background: linear-gradient(#2a2a2a, #1c1c1c); flex: none; display: flex; border-bottom: 1px solid #161616; }
.doctabs a { display: flex; align-items: center; gap: 9px; font-weight: bold; background: #353535; padding: 2px 8px 0 10px; border-top: 1px solid #444; }
.stage { flex: 1; min-height: 0; display: grid; grid-template-columns: 18px 1fr 16px; grid-template-rows: 18px 1fr; }
.corner { background: #242424; border-right: 1px solid #555; border-bottom: 1px solid #555; }
.hruler { width: 100%; height: 18px; background: #242424; border-bottom: 1px solid #666; }
.vruler { width: 18px; height: 100%; background: #242424; border-right: 1px solid #666; grid-row: 2; }
.hruler text, .vruler text { font-size: 11px; fill: #a5a5a5; }
.view { position: relative; overflow: hidden; background: #181818; }
.vscroll { grid-column: 3; grid-row: 1 / 3; background: linear-gradient(90deg, #1e1e1e, #282828); }
.art { position: absolute; left: 10px; top: 99px; width: 1294px; height: 605px; background: #f0f; border: 1px solid #ff66ff; }
.gv { position: absolute; top: 0; bottom: 0; width: 1px; background: #7ff; }
.gh { position: absolute; left: 0; right: 0; height: 1px; background: #a4dcff; }
.g1 { left: 333px; } .g2 { left: 656px; } .g3 { left: 980px; }
.h1 { top: 249px; } .h2 { top: 401px; } .h3 { top: 552px; }
.status { display: flex; align-items: stretch; height: 17px; background: linear-gradient(#222, #2a2a2a); flex: none; line-height: 17px; }
.status > span, .status button { background: #353535; border-right: 1px solid #222; }
.pct { width: 49px; padding-left: 4px; color: #ddd; }
.tf { width: 23px; display: flex; align-items: center; justify-content: center; }
.docsize { width: 171px; text-align: center; }
.status button { width: 12px; }
.status .size { width: 16px; margin: 0 0 0 auto; background: #353535; }
.timeline { height: 107px; flex: none; display: flex; flex-direction: column; border-top: 2px solid #161616; }
.frames { flex: 1; background: #2b2b2b; padding-top: 1px; }
.frame { width: 51px; height: 100%; background: #4c5468; padding: 3px; }
.thumb { height: 46px; width: 45px; border: 1px solid #d8dcf0; background: #353535; padding: 2px; position: relative; box-shadow: inset 0 0 0 1px #3f4658; }
.thumb i { height: 18px; margin-top: 11px; background: #f0f; }
.thumb b { position: absolute; left: 2px; top: 1px; width: 14px; height: 14px; background: #353535; padding-left: 3px; }
.frame span { display: flex; align-items: center; gap: 2px; padding-left: 5px; height: 17px; }
.controls { height: 20px; display: flex; border-top: 1px solid #444; background: #262626; flex: none; }
.controls > .blank, .controls > button, .controls > div { background: #353535; border-right: 1px solid #222; display: flex; align-items: center; }
.blank { width: 30px; }
.controls .forever { width: 75px; color: #606060; justify-content: space-between; padding: 0 4px 0 10px; }
.play { width: 116px; justify-content: space-between; padding: 0 7px 0 6px; }
.more3 { width: 88px; justify-content: space-between; padding: 0 9px 0 8px; }
.controls .end { width: 15px; background: #353535; margin-left: auto; }

.dock { width: 38px; display: flex; flex-direction: column; }
.dockcol { flex: 1; background: #353535; }
.dockcol button { width: 100%; height: 41px; flex-direction: column; justify-content: flex-start; border-top: 1px solid #444; border-bottom: 1px solid #161616; padding-top: 4px; }
.dockcol .hgrip { margin-bottom: 6px; }
.chr { font: 17px/18px "Open Sans", sans-serif; color: #b8b8b8; }
.pil { font: bold 17px/20px "DejaVu Sans", sans-serif; color: #a8a8a8; }
.ku { width: 18px; height: 18px; margin-top: 1px; border-radius: 8px; background: #a5a5a5; color: #333; font: bold 10px/17px "Open Sans", sans-serif; text-align: center; }

.panels { width: 231px; display: flex; flex-direction: column; }
.swatchbody { display: flex; justify-content: space-between; flex: 376 0 0; min-height: 0; background: #2b2b2b; }
.swatches { display: grid; grid-template-columns: repeat(18, 12px); grid-auto-rows: 12px; align-content: start; padding-top: 1px; }
.swatches i { width: 11px; height: 11px; }
.track { width: 15px; background: linear-gradient(90deg, #1e1e1e, #282828); }
.swfoot { height: 18px; background: #2b2b2b; border-bottom: 2px solid #161616; display: flex; align-items: center; justify-content: flex-end; gap: 18px; padding-right: 29px; flex: none; }
.adjust { height: 114px; background: #353535; border-bottom: 2px solid #161616; padding: 5px 9px 0; flex: none; }
.adjust h2 { font-size: 11px; line-height: 16px; color: #909090; }
.adjust div { display: flex; gap: 7px; width: 191px; justify-content: center; padding-top: 9px; }
.adjust svg { width: 17px; height: 18px; }
.lrow { height: 28px; background: #353535; border-bottom: 1px solid #1e1e1e; border-top: 1px solid #444; display: flex; align-items: center; padding: 0 5px; color: #8a8a8a; flex: none; }
.kind { width: 76px; padding-left: 5px; }
.kind select { padding-left: 4px; }
.fi { display: flex; flex: 1; justify-content: space-between; padding: 0 20px 0 13px; }
.switch { width: 9px; height: 18px; background: linear-gradient(#666 50%, #222 50%); border: 1px solid #222; }
.blend { width: 110px; }
.push { margin-left: auto; }
.pc { width: 59px; margin-left: 6px; }
.uni svg { margin-left: 6px; }
.fxs, .fx { font: italic 15px/16px "Liberation Serif", serif; }
.fxs { margin-left: 6px; }
.uni .mc { margin: 10px 0 0 -3px; }
.prop { display: flex; align-items: center; gap: 4px; }
.prop input { appearance: none; width: 13px; height: 13px; border: 1px solid #242424; background: #3c3c3c url("data:image/svg+xml,%3Csvg xmlns='http://www.w3.org/2000/svg' width='11' height='11'%3E%3Cpath d='M2 5l3 4 5-8' fill='none' stroke='%23909090' stroke-width='2'/%3E%3C/svg%3E") center no-repeat; }
.lockr svg { margin-left: 9px; }
.lockr .combo svg { margin: 0; }
.layers { flex: 262 0 0; min-height: 0; display: flex; background: #2b2b2b; }
.layerlist { flex: 1; }
.layer { display: flex; align-items: center; height: 25px; background: #4c5468; border-bottom: 1px solid #222; padding-right: 17px; color: #d8d8d8; }
.vis { width: 31px; height: 24px; background: #353535; display: flex; align-items: center; justify-content: center; }
.lthumb { width: 38px; padding-left: 1px; }
.lname { flex: 1; padding-left: 7px; }
.layfoot { justify-content: space-between; padding: 0 29px 0 28px; color: #888; }

.taskbar { height: 51px; flex: none; display: flex; background: linear-gradient(90deg, #36251d, #241c19 12%, #2f2119 28%, #2b1e1a 50%, #33211a 72%, #2c1c1c 84%, #32241a 92%, #2f1b1c); }
.taskbar button { width: 51px; margin-right: 11px; border-bottom: 3px solid #78b0e0; flex: none; padding-top: 2px; }
.taskbar .start { width: 60px; margin-right: 9px; border-color: transparent; }
.taskbar .active { width: 61px; margin-left: -5px; background: #554c47; }
.psicon { width: 28px; height: 28px; border: 2px solid #8cc4f8; background: #120a50; color: #8cc4f8; font: bold 14px/23px "Open Sans", sans-serif; }
.tray { margin-left: auto; display: flex; align-items: center; gap: 12px; color: #fff; padding-right: 5px; }
.clock { display: flex; flex-direction: column; align-items: center; width: 68px; font: 14px/22px "Open Sans", sans-serif; }
.note { position: relative; width: 34px; margin-left: 10px; }
.note span { position: absolute; left: 9px; top: 9px; width: 21px; height: 21px; border-radius: 50%; border: 1px solid #888; background: #333; text-align: center; font: 14px/18px "Open Sans", sans-serif; }
.show { width: 1px; height: 100%; background: #776; }

.dialog { position: absolute; background: #eee; color: #111; border: 1px solid #60206a; box-shadow: 0 3px 12px rgba(60, 0, 60, .6); font-size: 12px; }
.dnew { left: 483px; top: 310px; width: 534px; }
.dpre { left: 1082px; top: 392px; width: 417px; }
.title { display: flex; align-items: center; justify-content: space-between; height: 32px; background: #fff; padding: 0 14px 2px 3px; }
.title h1 { font: 14px/20px "Open Sans", sans-serif; color: #111; }
.dbody { display: flex; gap: 16px; padding: 10px; }
.fields { flex: 1; min-width: 0; }
.row { display: flex; align-items: center; height: 22px; margin-top: 8px; gap: 4px; }
.row label { width: 142px; text-align: right; flex: none; padding-bottom: 1px; }
.row label.off { color: #aaa; }
.dialog input:not([type]) { height: 20px; border: 1px solid #7a7a7a; background: #fff; padding: 0 5px; flex: 1; border-radius: 0; }
.dialog select { appearance: none; height: 22px; flex: 1; border: 1px solid #7a7a7a; border-radius: 0; padding: 0 18px 0 6px; background: #fff url("data:image/svg+xml,%3Csvg xmlns='http://www.w3.org/2000/svg' width='10' height='6'%3E%3Cpath d='M.5.500L5 5 9.500.5' fill='none' stroke='%23444'/%3E%3C/svg%3E") right 5px center no-repeat; }
.dialog .row.name { height: 20px; margin: 0; }
.dnew .name label { width: 143px; }
.dnew .fields { padding-bottom: 3px; }
.group { border: 1px solid #a0a0a0; margin: 13px 3px 0 0; padding: 0 6px 6px 0; }
.dialog .row.preset { width: 317px; height: 24px; margin: -10px 0 0 13px; background: #eee; padding-right: 6px; }
.row.preset label { width: 57px; }
.dialog .preset select { height: 24px; }
.szwrap { flex: 1; display: flex; border: 1px solid #ccc; background: #fff; padding: 1px; height: 22px; }
.dialog .szwrap select { height: 18px; border: 0; opacity: .5; background-color: transparent; background-position: right 4px center; box-shadow: inset 206px 0 #e4e4e4; }
.dialog .row .num { flex: 0 0 98px; }
.dialog .row .mode { flex: 0 0 95px; }
.cm select + select { margin-left: 3px; }
.adv { display: flex; align-items: center; height: 22px; margin: 16px 10px 18px 20px; }
.adv button { width: 16px; height: 16px; border-radius: 50%; border: 1px solid #999; background: #fafafa; margin-right: 6px; }
.adv hr { flex: 1; border: 0; border-top: 1px solid #aaa; margin: 0 0 0 6px; }
.btns { width: 107px; flex: none; display: flex; flex-direction: column; gap: 10px; text-align: center; padding-top: 1px; }
.btns button { height: 18px; border: 1px solid #adadad; background: #e1e1e1; flex: none; }
.btns .ok { border: 2px solid #0078d7; }
.btns button:disabled { background: #ccc; border-color: #bfbfbf; color: #888; }
.btns p { padding-right: 6px; }
.btns .isz { margin-top: 108px; }
.dpre .dbody { padding: 10px 10px 11px; }
.dpre .btns { width: 76px; }
.dialog .row.pname { height: 20px; margin: 0; }
.pname label { width: 75px; }
fieldset { display: grid; grid-template-columns: 91px 1fr; margin: 8px 0 0; padding: 5px 9px 8px; border: 1px solid #a0a0a0; }
legend { padding: 0 4px; margin-left: 7px; }
fieldset label { display: flex; align-items: center; gap: 3px; height: 17px; }
fieldset input { appearance: none; width: 16px; height: 16px; border: 1px solid #333; background: #fff url("data:image/svg+xml,%3Csvg xmlns='http://www.w3.org/2000/svg' width='12' height='12'%3E%3Cpath d='M1 6l3.500 3.500L11 2.500' fill='none' stroke='%23333' stroke-width='1.300'/%3E%3C/svg%3E") center no-repeat; }
.info { display: flex; align-items: center; gap: 8px; margin-top: 9px; padding-left: 4px; }
.info p { white-space: nowrap; }
.info svg { margin-top: 2px; }
```
FILE: script.js
```js
// Actions palette: label, dialog marker of the row, row classes
const sets = [
  ["Custom", "", "set cur"], ["Default Actions", "dlg dash", "set"], ["GIF Tools", "", "set"],
  ["Hope Pop Art Generator", "dlg dash", "set"], ["TH Tools", "", "set"], ["XToolkit", "dlg dash", "set open"]
];
const kids = ["- Action Tools -", "Action descriptor to XML", "Action descriptor to Javascr...", "Action eval demo",
  "Action file from XML", "Action file from SLCode", "Action file to Javascript", "Action file to XML", "Action lister",
  "Action set runner", "Action to Javascript", "Action to XML", "Backup Actions Palette", "Save action sets",
  "- Application Scripts -", "Add watermark", "Adjust levels", "Adjust RGB levels", "Convert", "Import images",
  "Insert image", "Normalize", "On event open", "Refresh CS3 presets", "Remove alpha channels", "Save sequential",
  "Simple UI", "Update metadata", "XBatch", "XScan", "XWatermark", "- Demo Scripts -", "Color book",
  "Color chooser icon", "Getter Demo", "Log window", "Sample UI", "- Toolkit Scripts -", "Droplet decompiler", "Flatten JS"];
const icon = (id, w, h) => `<svg width="${w}" height="${h}"><use href="#${id}"/></svg>`;
const rows = sets.map(([text, mode, kind]) => {
  const open = kind.includes("open");
  return `<div class="act ${kind}"><span class="ck">${icon("check", 10, 9)}</span><span class="bx ${mode}"></span>
    <span class="ct"><span class="ar">${open ? icon("trid", 9, 7) : icon("trir", 7, 9)}</span>
    <span class="fo">${open ? icon("folderopen", 17, 12) : icon("folder", 15, 12)}</span><span class="tx">${text}</span></span></div>`;
}).concat(kids.map((text, n) => {
  const head = text[0] === "-";
  const indent = head && !text.includes("Toolkit");
  return `<div class="act kid ${indent ? "head" : ""}"><span class="ck">${head ? "" : icon("check", 10, 9)}</span>
    <span class="bx ${text === "XWatermark" ? "dlg fill" : ""}"></span>
    <span class="ct"><span class="ar">${n ? icon("trir", 7, 9) : icon("trid", 9, 7)}</span><span class="tx">${text}</span></span></div>`;
}));
document.getElementById("actlist").innerHTML = rows.join("");

// Rulers: one document pixel is 1.4065 screen pixels
const scale = 1.4065;
let h = "", v = "";
for (let u = -5; u <= 920; u += 5) {
  const x = Math.round(10 + u * scale) + 0.5;
  const top = u % 50 === 0 ? 0 : u % 10 === 0 ? 12 : 14;
  h += `<path d="M${x} ${top}V18" stroke="#666"/>`;
  if (u % 50 === 0) h += `<text x="${x + 3}" y="11">${u}</text>`;
}
for (let u = -70; u < 500; u += 5) {
  const y = Math.round(99 + u * scale) + 0.5;
  const left = u % 50 === 0 ? 0 : u % 10 === 0 ? 12 : 14;
  v += `<path d="M${left} ${y}H18" stroke="#666"/>`;
  if (u % 50 === 0) [...String(Math.abs(u))].forEach((d, n) => { v += `<text x="3" y="${y + 12 + n * 11}">${d}</text>`; });
}
document.getElementById("hruler").innerHTML = h;
document.getElementById("vruler").innerHTML = v;

const colors = `ff0000 ffff00 00ff00 00ffff 0000ff ff00ff ffffff ebebeb e1e1e1 d7d7d7 cccccc c2c2c2 b7b7b7 acacac a0a0a0 959595 ee1d24 fff100
00a650 00aeef 2f3192 ed008c 898989 7d7d7d 707070 626262 555555 464646 363636 262626 111111 000000 f69679 f9ad81 fdc689 fff799
c4df9b a3d39c 82ca9c 7accc8 6dcff6 7ea7d8 8493ca 8882be a186be bc8dbf f49ac1 f5989d f26c4f f68e56 fbaf5d fff568 acd373 7cc576
3cb878 1cbbb4 00bff3 448ccb 5574b9 605ca8 855fa8 a763a8 f06ea9 f26d7d ed1c24 f26522 f7941d fff200 8dc73f 39b54a 00a651 00a99d
00aeef 0072bc 0054a6 2e3192 662d91 92278f ec008c ed145b 9e0b0f a0410d a36209 aba000 598527 1a7b30 007236 00746b 0076a3 004b80
003471 1b1464 440e62 630460 9e005d 9e0039 790000 7b2e00 7d4900 827b00 406618 005e20 005826 005952 005b7f 003663 002157 0d004c
32004b 4b0049 7b0046 7a0026 c7b299 998675 736357 534741 37302d c69c6d a67c52 8c6239 754c24 603913 6f8ddb f24848 ffcb52 f7930f
2a2f3e 222228 86868c a0cc0c`.split(/\s+/);
document.getElementById("swatches").innerHTML = colors.map(c => `<i style="background:#${c}"></i>`).join("");
```
